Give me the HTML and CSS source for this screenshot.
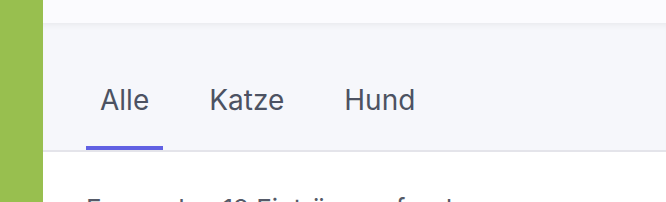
FILE: index.html
```html
<!DOCTYPE html>
<html lang="de">
<head>
    <meta charset="UTF-8">
    <meta name="viewport" content="width=device-width, initial-scale=1.0">
    <title>Tiere</title>
    <link rel="stylesheet" href="styles.css">
</head>
<body>
    <div class="layout">
        <div class="sidebar"></div>
        <div class="main">
            <div class="topbar"></div>
            <div class="tabbar">
                <ul class="tabs">
                    <li class="tab active">Alle</li>
                    <li class="tab">Katze</li>
                    <li class="tab">Hund</li>
                </ul>
            </div>
            <div class="content">
                <p class="count">Es wurden 12 Einträge gefunden</p>
            </div>
        </div>
    </div>
</body>
</html>
```

FILE: styles.css
```css
*{
    margin: 0;
    padding: 0;
    box-sizing: border-box;
}
li{
    list-style: none;
}
body{
    font-family: Inter, "Noto Sans", sans-serif;
    background-color: #fff;
    overflow: hidden;
}
.layout{
    display: flex;
    height: 202px;
    overflow: hidden;
}
.sidebar{
    width: 43px;
    flex-shrink: 0;
    background-color: #98bf4f;
}
.main{
    flex: 1;
    display: flex;
    flex-direction: column;
}
.topbar{
    height: 23px;
    flex-shrink: 0;
    background-color: #fbfbfe;
}
.tabbar{
    height: 129px;
    flex-shrink: 0;
    background-color: #f6f7fb;
    box-shadow: inset 0 6px 6px -4px rgba(0,0,0,0.06);
    border-bottom: 2px solid #e4e4ea;
    display: flex;
    align-items: flex-end;
    padding-left: 43px;
}
.tabs{
    display: flex;
    gap: 32px;
}
.tab{
    padding: 0 14px 31px;
    font-size: 28px;
    color: #4c5262;
    border-bottom: 4px solid transparent;
    line-height: 30px;
}
.tab.active{
    border-bottom-color: #6161e3;
}
.content{
    flex-shrink: 0;
    padding: 42px 0 0 43px;
}
.count{
    font-size: 26px;
    line-height: 30px;
    color: #555a68;
}
```
